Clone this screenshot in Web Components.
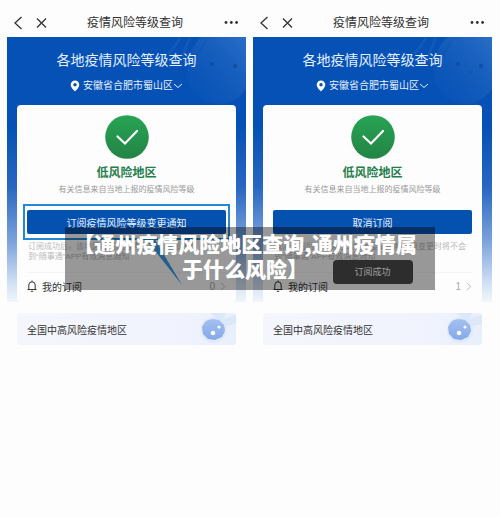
<!DOCTYPE html>
<html lang="zh-CN">
<head>
<meta charset="utf-8">
<meta name="viewport" content="width=device-width, initial-scale=1">
<title>疫情风险等级查询</title>
<style>
  body {
    margin: 0;
    background: #fdfdfd;
    color: #333;
    font-family: "Liberation Sans", "Noto Sans CJK SC", sans-serif;
  }
</style>
</head>
<body>
<risk-compare>
  <risk-screen>
    <risk-card highlighted count="0">
      <span slot="action">订阅疫情风险等级变更通知</span>
      <span slot="hint">订阅成功后，该地区疫情风险等级变更时您将收<br>到“随事通”APP有效消息通知</span>
    </risk-card>
  </risk-screen>
  <risk-screen>
    <risk-card count="1">
      <span slot="action">取消订阅</span>
      <span slot="hint">取消订阅后，您关注的地区疫情风险等级变更时将不会<br>到“随事通”APP有效消息通知</span>
      <toast-message slot="toast">订阅成功</toast-message>
    </risk-card>
  </risk-screen>
  <caption-banner slot="caption">【通州疫情风险地区查询,通州疫情属于什么风险】</caption-banner>
</risk-compare>

<script>
class RiskCompare extends HTMLElement {
  constructor() {
    super();
    this.attachShadow({ mode: "open" });
    this.shadowRoot.innerHTML = `
    <style>
    :host {
      display: block;
      position: relative;
    }
    .screens {
      display: grid;
      grid-template-columns: 1fr 1fr;
      gap: 7px;
      padding: 0 8px 0 7px;
    }
    </style>
    <main class="screens"><slot></slot></main>
    <slot name="caption"></slot>
    `;
  }
}
customElements.define("risk-compare", RiskCompare);

class NavBar extends HTMLElement {
  constructor() {
    super();
    this.attachShadow({ mode: "open" });
    this.shadowRoot.innerHTML = `
    <style>
    :host {
      display: flex;
      align-items: center;
      justify-content: space-between;
      height: 29px;
      padding: 8px 7px 0 6px;
    }
    .left {
      display: flex;
      gap: 12px;
    }
    button {
      display: block;
      padding: 0;
      border: 0;
      background: none;
      cursor: pointer;
    }
    svg {
      display: block;
      fill: none;
      stroke: #333;
      stroke-width: 1.3;
    }
    h1 {
      margin: 0;
      font-size: 12px;
      line-height: 18px;
      font-weight: 400;
    }
    </style>
    <div class="left">
      <button aria-label="返回"><svg width="10" height="14" viewBox="0 0 10 14"><path d="M8.500 1 2 7l6.500 6"/></svg></button>
      <button aria-label="关闭"><svg width="12" height="14" viewBox="0 0 12 14"><path d="m2 2.500 9 9m0-9-9 9"/></svg></button>
    </div>
    <h1><slot></slot></h1>
    <button aria-label="更多"><svg width="16" height="14" viewBox="0 0 16 14"><g fill="#333" stroke="none"><circle cx="3" cy="6.500" r="1.400"/><circle cx="8.300" cy="6.500" r="1.400"/><circle cx="13.600" cy="6.500" r="1.400"/></g></svg></button>
    `;
  }
}
customElements.define("nav-bar", NavBar);

class RegionPicker extends HTMLElement {
  constructor() {
    super();
    this.attachShadow({ mode: "open" });
    this.shadowRoot.innerHTML = `
    <style>
    :host {
      display: flex;
      align-items: center;
      justify-content: center;
      color: #e6f0ff;
    }
    label {
      display: flex;
      margin-right: 3px;
    }
    select {
      appearance: none;
      margin: 0;
      padding: 0;
      border: 0;
      background: none;
      color: inherit;
      font-family: inherit;
      font-size: 10px;
      line-height: 16px;
    }
    option {
      color: #333;
    }
    </style>
    <label for="region" aria-label="地区"><svg width="10" height="12" viewBox="0 0 10 12"><path fill="#fff" fill-rule="evenodd" d="M5 .5a4.300 4.300 0 0 0-4.300 4.300C.7 7.700 5 11.500 5 11.500s4.300-3.800 4.300-6.700A4.300 4.300 0 0 0 5 .5Zm0 2.600a1.700 1.700 0 1 1 0 3.400 1.700 1.700 0 0 1 0-3.400Z"/></svg></label>
    <select id="region"><option>安徽省合肥市蜀山区</option></select>
    <svg width="10" height="6" viewBox="0 0 10 6"><path d="m1 1 4 3.500L9 1" fill="none" stroke="#e6f0ff"/></svg>
    `;
  }
}
customElements.define("region-picker", RegionPicker);

class RiskScreen extends HTMLElement {
  constructor() {
    super();
    this.attachShadow({ mode: "open" });
    this.shadowRoot.innerHTML = `
    <style>
    :host {
      display: block;
      min-width: 0;
    }
    .hero {
      position: relative;
      padding: 13px 10px 0;
      background: linear-gradient(#0551b5 0, #0551b5 90px, #2867c1 150px, #7ca4dc 205px, #d5e3f6 248px, #fdfdfd 272px);
    }
    .art {
      position: absolute;
      top: 0;
      right: 0;
    }
    .content {
      position: relative;
    }
    h2 {
      margin: 0 0 7px;
      color: #e6f0ff;
      font-size: 14px;
      line-height: 20px;
      font-weight: 400;
      text-align: center;
    }
    region-picker {
      height: 18px;
      margin-bottom: 10px;
    }
    region-link {
      margin: 11px 10px 0;
    }
    </style>
    <nav-bar>疫情风险等级查询</nav-bar>
    <section class="hero">
      <svg class="art" width="100" height="68" viewBox="0 0 100 68">
        <defs><linearGradient id="glow" x1="1" y1="0" x2="0" y2="1"><stop stop-color="#4f8ad6" stop-opacity=".5"/><stop offset="1" stop-color="#1a60bf" stop-opacity=".05"/></linearGradient></defs>
        <path d="M55 0C38 18 36 46 53 60c15 12 36 8 47-8V0Z" fill="url(#glow)"/>
        <path d="M34 0c-3 8-8 12-12 17M44 0 36 20" stroke="#3672c6" stroke-width="3" fill="none" opacity=".25"/>
        <path d="M60 4 48 22" stroke="#0b4ba5" stroke-width="1.500" opacity=".3"/>
        <g fill="#0b439a" opacity=".55"><circle cx="66" cy="27" r="2"/><circle cx="89" cy="29" r="2.200"/><circle cx="78" cy="35" r="1"/></g>
      </svg>
      <div class="content">
        <h2>各地疫情风险等级查询</h2>
        <region-picker></region-picker>
        <slot></slot>
      </div>
    </section>
    <region-link>全国中高风险疫情地区</region-link>
    `;
  }
}
customElements.define("risk-screen", RiskScreen);

class RiskCard extends HTMLElement {
  constructor() {
    super();
    this.attachShadow({ mode: "open" });
    this.shadowRoot.innerHTML = `
    <style>
    :host {
      display: block;
      position: relative;
      padding: 10px 6px 3px;
      border-radius: 4px;
      background: #fdfdfd;
      text-align: center;
    }
    .badge {
      display: block;
      margin: 0 auto 5px;
    }
    h3 {
      margin: 0;
      color: #23804a;
      font-size: 12px;
      line-height: 18px;
      font-weight: 700;
    }
    .source {
      margin: 0 0 6px;
      color: #999;
      font-size: 8px;
      line-height: 16px;
    }
    .frame {
      position: relative;
      padding: 4px 2px;
      border: 2px solid transparent;
    }
    :host([highlighted]) .frame {
      border-color: #2488d4;
    }
    .frame button {
      display: block;
      width: 100%;
      height: 24px;
      padding: 0;
      border: 0;
      border-radius: 2px;
      background: #0551b0;
      color: #e8f1ff;
      font-family: inherit;
      font-size: 10px;
      cursor: pointer;
    }
    .pointer {
      display: none;
      position: absolute;
      top: 100%;
      left: 58%;
    }
    :host([highlighted]) .pointer {
      display: block;
    }
    .hint {
      margin: 2px 5px 0;
      height: 20px;
      overflow: hidden;
      color: #bbb;
      font-size: 8px;
      line-height: 10px;
      text-align: left;
      white-space: nowrap;
    }
    .mine {
      display: flex;
      align-items: center;
      gap: 5px;
      height: 26px;
      margin: 10px 4px 0;
      border-top: 1px solid #f5f5f5;
      color: #333;
      font-size: 10px;
      text-decoration: none;
    }
    .count {
      margin-left: auto;
      color: #aaa;
    }
    </style>
    <svg class="badge" width="44" height="44" viewBox="0 0 44 44">
      <defs><linearGradient id="green" x1="0" y1="0" x2="0" y2="1"><stop stop-color="#27a454"/><stop offset="1" stop-color="#238445"/></linearGradient></defs>
      <circle cx="22" cy="22" r="21.800" fill="url(#green)"/>
      <path d="m12.500 21.500 7.500 7L32 16" fill="none" stroke="#fff" stroke-width="2.200" stroke-linecap="round"/>
    </svg>
    <h3>低风险地区</h3>
    <p class="source">有关信息来自当地上报的疫情风险等级</p>
    <div class="frame">
      <button><slot name="action"></slot></button>
      <svg class="pointer" width="40" height="48" viewBox="0 0 40 48"><path d="M2 0h9l28 47Z" fill="#36a0e8"/></svg>
    </div>
    <p class="hint"><slot name="hint"></slot></p>
    <a class="mine" href="#">
      <svg width="10" height="12" viewBox="0 0 10 12"><path d="M.5 9.500h9M1.800 9.500V5a3.200 3.200 0 0 1 6.400 0v4.500M5 .5v1.300M3.800 11.300h2.400" fill="none" stroke="#333"/></svg>
      <span>我的订阅</span>
      <span class="count"></span>
      <svg width="6" height="9" viewBox="0 0 6 9"><path d="m1 .8 3.700 3.700L1 8.200" fill="none" stroke="#bbb"/></svg>
    </a>
    <slot name="toast"></slot>
    `;
    this._count = this.shadowRoot.querySelector(".count");
  }

  connectedCallback() {
    this._count.textContent = this.getAttribute("count");
  }
}
customElements.define("risk-card", RiskCard);

class RegionLink extends HTMLElement {
  constructor() {
    super();
    this.attachShadow({ mode: "open" });
    this.shadowRoot.innerHTML = `
    <style>
    :host {
      display: block;
    }
    a {
      display: flex;
      align-items: center;
      justify-content: space-between;
      height: 32px;
      padding-left: 10px;
      border-radius: 3px;
      background: linear-gradient(90deg, #f5f6fd, #f0f3fd 75%, #e8effc);
      color: #333;
      font-size: 10px;
      text-decoration: none;
    }
    </style>
    <a href="#">
      <span><slot></slot></span>
      <svg width="44" height="32" viewBox="0 0 44 32">
        <defs><linearGradient id="ball" x1="0" y1="0" x2="0" y2="1"><stop stop-color="#a5bff0"/><stop offset="1" stop-color="#84a9ea"/></linearGradient></defs>
        <path d="M18 0h16l-3 6 13-4v9l-10 2Z" fill="#d3e1f8" opacity=".6"/>
        <circle cx="22" cy="17" r="13" fill="#dbe7fb" opacity=".7"/>
        <path d="m16 7 5-1 6 1 5 5 1 6-3 6-7 3-7-1-5-5-1-7 3-5Z" fill="url(#ball)"/>
        <g fill="#f8fbff"><circle cx="21" cy="20" r="2.300"/><circle cx="27" cy="14" r="1.600"/></g>
      </svg>
    </a>
    `;
  }
}
customElements.define("region-link", RegionLink);

class ToastMessage extends HTMLElement {
  constructor() {
    super();
    this.attachShadow({ mode: "open" });
    this.shadowRoot.innerHTML = `
    <style>
    :host {
      position: absolute;
      bottom: 18px;
      left: 50%;
      transform: translateX(-50%);
      width: 80px;
      border-radius: 4px;
      background: #4b4b4b;
      color: #fff;
      font-size: 9px;
      line-height: 24px;
      text-align: center;
    }
    </style>
    <slot></slot>
    `;
  }
}
customElements.define("toast-message", ToastMessage);

class CaptionBanner extends HTMLElement {
  constructor() {
    super();
    this.attachShadow({ mode: "open" });
    this.shadowRoot.innerHTML = `
    <style>
    :host {
      display: block;
      position: absolute;
      top: 227px;
      left: 13%;
      right: 13%;
      padding: 4px 18px 9px 8px;
      background: rgba(0, 0, 0, 0.4);
      color: #fff;
      font-family: "Noto Sans CJK SC", sans-serif;
      font-size: 21px;
      line-height: 25px;
      font-weight: 900;
      text-align: center;
    }
    </style>
    <slot></slot>
    `;
  }
}
customElements.define("caption-banner", CaptionBanner);
</script>
</body>
</html>
